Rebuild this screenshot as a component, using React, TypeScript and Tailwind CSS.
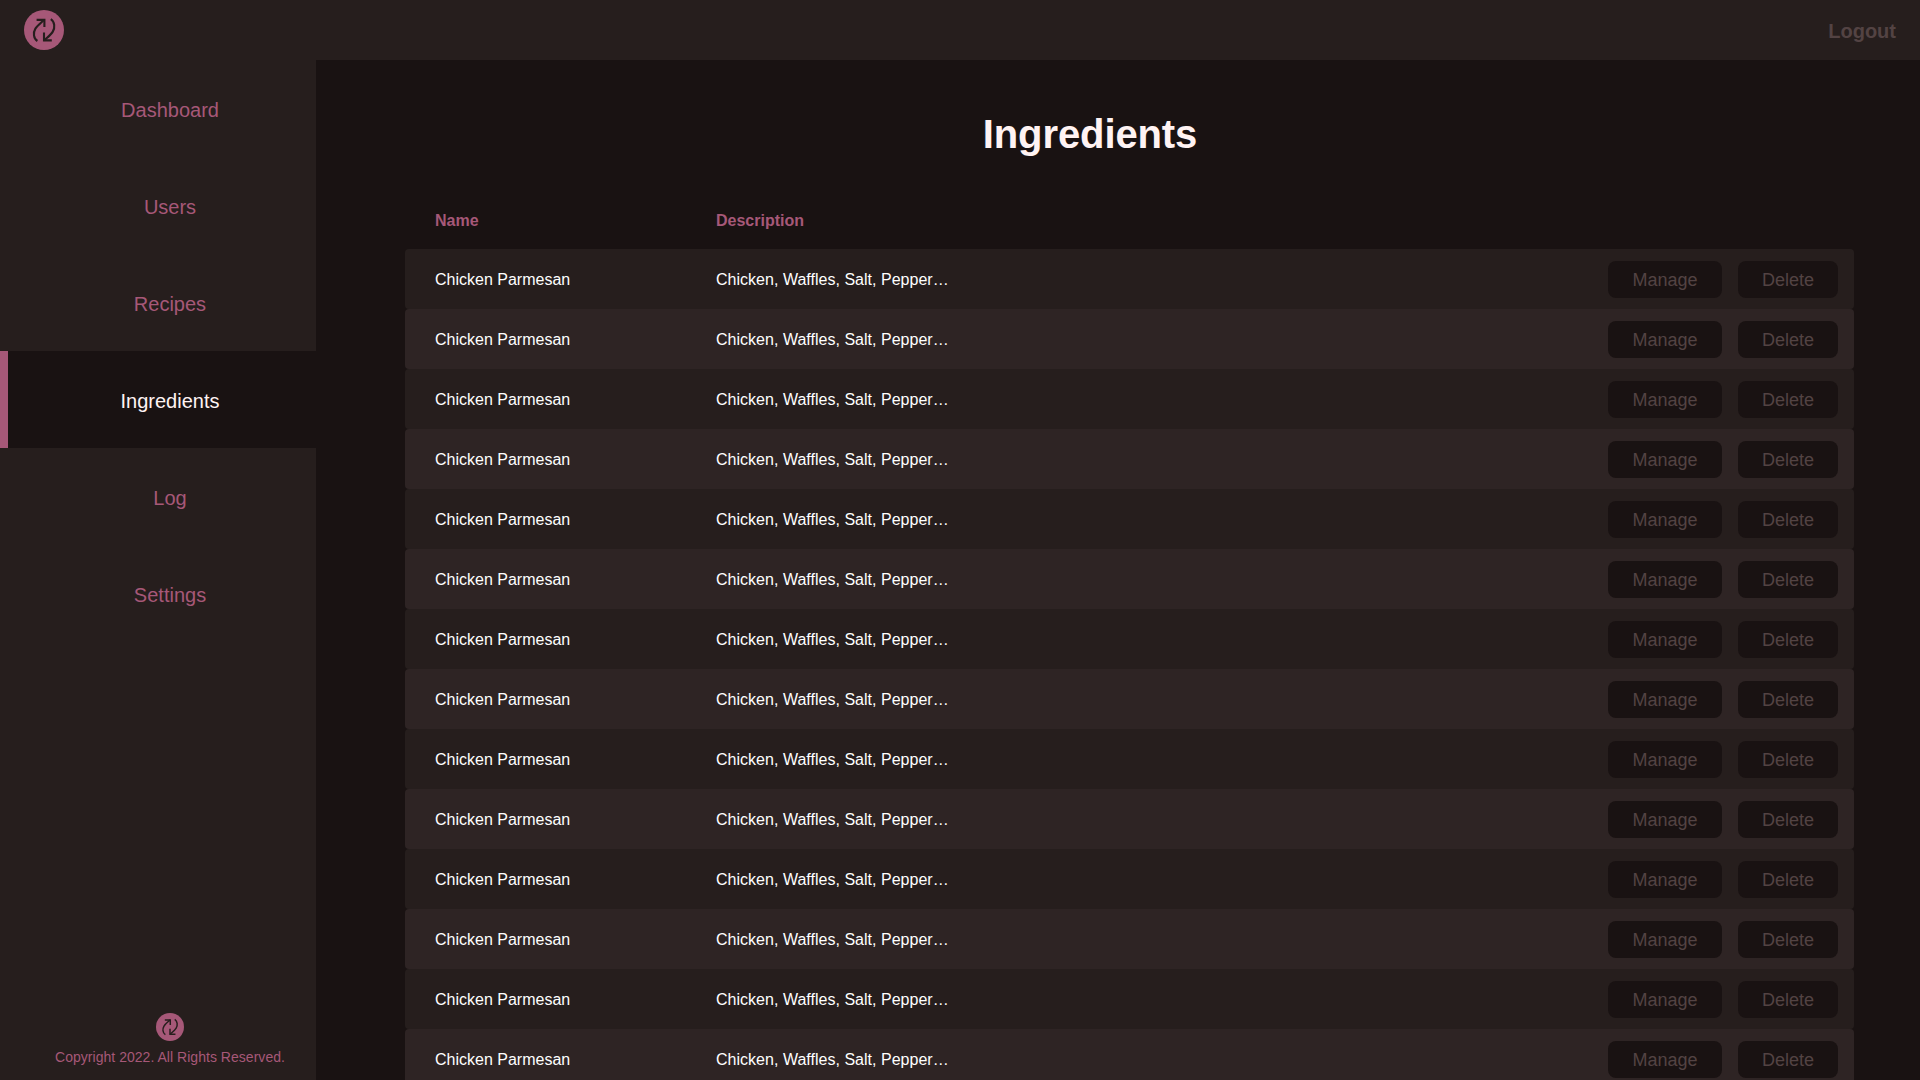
const NAV = ['Dashboard', 'Users', 'Recipes', 'Ingredients', 'Log', 'Settings'];
const ACTIVE = 'Ingredients';

const ROWS = Array.from({ length: 14 }, (_, id) => ({
  id,
  name: 'Chicken Parmesan',
  description: 'Chicken, Waffles, Salt, Pepper…',
}));

function Logo({ className }: { className: string }) {
  return (
    <svg viewBox="0 0 40 40" className={className} fill="none">
      <circle cx="20" cy="20" r="20" fill="#a65878" />
      <g stroke="#261e1d" strokeWidth="2.1">
        <path d="M13.4 31C9.4 28.4 9 22.6 11.4 18.6C13.4 15.4 17 12.8 20.2 9.8" />
        <path d="M12.6 9.9H20.4V17" />
        <path d="M26.8 9.2C30.8 11.8 31.2 17.6 28.8 21.6C26.8 24.8 23.4 27.4 20.2 30.4" />
        <path d="M27.8 30.4H20V22.6" />
      </g>
    </svg>
  );
}

function Header() {
  return (
    <header className="flex h-[60px] shrink-0 items-center justify-between bg-[#261e1d] px-6">
      <Logo className="size-10" />
      <button className="pt-px text-xl font-bold text-[#534343]">Logout</button>
    </header>
  );
}

function Sidebar() {
  return (
    <aside className="flex w-[316px] shrink-0 flex-col justify-between bg-[#261e1d] text-[#a65878]">
      <nav>
        {NAV.map((item) => (
          <a
            key={item}
            className={
              item === ACTIVE
                ? 'flex h-[97px] items-center justify-center border-l-8 border-[#a65878] bg-[#191212] pt-[3px] pl-4 text-xl text-[#fff3f3]'
                : 'flex h-[97px] items-center justify-center pt-[3px] pl-6 text-xl'
            }
          >
            {item}
          </a>
        ))}
      </nav>
      <footer className="flex flex-col items-center gap-1.5 pb-[13px] pl-6">
        <Logo className="size-7" />
        <p className="text-sm tracking-[0.03px]">Copyright 2022. All Rights Reserved.</p>
      </footer>
    </aside>
  );
}

function RowButton({ label, className }: { label: string; className: string }) {
  return (
    <button className={`${className} h-[37px] rounded-lg bg-[#191212] pt-px text-lg leading-none text-[#534343]`}>
      {label}
    </button>
  );
}

export default function App() {
  return (
    <div className="flex h-screen flex-col overflow-hidden bg-[#191212] font-['Liberation_Sans',sans-serif]">
      <Header />
      <div className="flex min-h-0 flex-1">
        <Sidebar />
        <main className="flex-1 overflow-hidden pr-[66px] pl-[89px]">
          <h1 className="mr-[79px] pt-[50px] text-center text-[40px] leading-[48px] font-bold tracking-[-0.1px] text-[#fff3f3]">
            Ingredients
          </h1>
          <div className="mt-8 flex h-[59px] items-center pt-[3px] pl-[30px] font-bold text-[#a65878]">
            <div className="w-[281px]">Name</div>
            <div>Description</div>
          </div>
          {ROWS.map((row) => (
            <div
              key={row.id}
              className="flex h-[60px] items-center rounded pr-4 pl-[30px] text-white odd:bg-[#261e1d] even:bg-[#2e2424]"
            >
              <div className="w-[281px] pt-0.5">{row.name}</div>
              <div className="flex-1 pt-0.5 tracking-[0.02px]">{row.description}</div>
              <div className="flex gap-4">
                <RowButton label="Manage" className="w-[114px]" />
                <RowButton label="Delete" className="w-[100px]" />
              </div>
            </div>
          ))}
        </main>
      </div>
    </div>
  );
}
